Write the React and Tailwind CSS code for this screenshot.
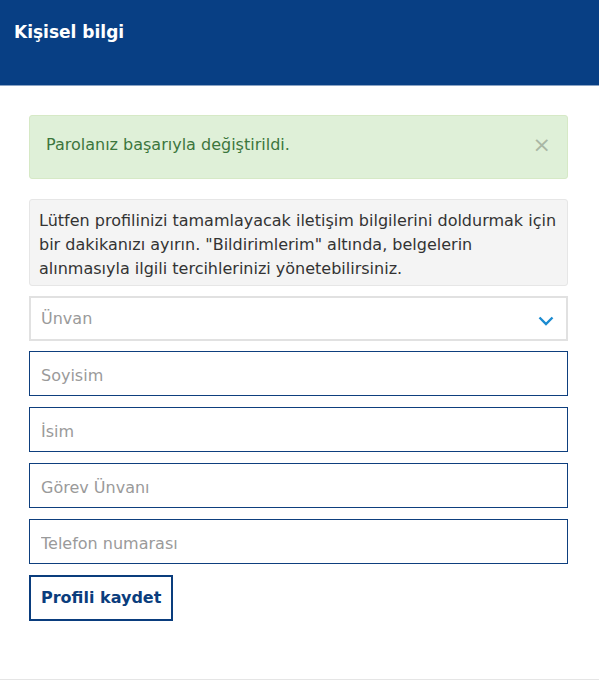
import React, { useState } from 'react';

const FIELDS = ['Soyisim', 'İsim', 'Görev Ünvanı', 'Telefon numarası'];

const App = () => {
  const [showAlert, setShowAlert] = useState(true);

  return (
    <div className="min-h-[681px] bg-white font-['DejaVu_Sans',Verdana,sans-serif] text-[#333]">
      <header className="h-[86px] bg-[#083f84] border-b border-[#8aa3c4] px-[14px] pt-[21px]">
        <h1 className="text-[17px] font-bold text-white leading-[22px]">Kişisel bilgi</h1>
      </header>

      <main className="pl-[29px] pr-[31px] pt-[29px] pb-[58px] border-b border-[#e5e5e5]">
        {showAlert && (
          <div className="h-[64px] mb-[20px] flex items-center justify-between rounded-[3px] bg-[#dff0d8] border border-[#d6e9c6] pl-[16px] pr-[16px] pb-[5px]">
            <span className="text-[16px] text-[#3c763d]">Parolanız başarıyla değiştirildi.</span>
            <button
              type="button"
              className="text-[#a9b6a4] text-[22px] leading-none"
              onClick={() => setShowAlert(false)}
            >
              ×
            </button>
          </div>
        )}

        <div className="mb-[10px] rounded-[3px] bg-[#f4f4f4] border border-[#e6e6e6] px-[9px] pt-[9px] pb-[4px] text-[16px] leading-[24px] text-[#333]">
          Lütfen profilinizi tamamlayacak iletişim bilgilerini doldurmak için bir dakikanızı ayırın. "Bildirimlerim" altında, belgelerin alınmasıyla ilgili tercihlerinizi yönetebilirsiniz.
        </div>

        <div className="h-[45px] mb-[10px] flex items-center justify-between border-2 border-[#e1e1e1] pl-[10px] pr-[12px] pt-[1px]">
          <span className="text-[16px] text-[#9a9a9a]">Ünvan</span>
          <svg width="16" height="10" viewBox="0 0 16 10" fill="none" className="mt-[3px]">
            <path d="M1.5 1.5 L8 8 L14.5 1.5" stroke="#1b8bd0" strokeWidth="2.4" />
          </svg>
        </div>

        {FIELDS.map(label => (
          <input
            key={label}
            type="text"
            placeholder={label}
            className="block w-full h-[45px] mb-[11px] border border-[#0e3f7e] px-[11px] pt-[3px] text-[16px] text-[#333] placeholder:text-[#9a9a9a] outline-none"
          />
        ))}

        <button
          type="button"
          className="h-[46px] px-[10px] border-2 border-[#0a3d7d] text-[16px] font-bold text-[#0a3d7d]"
        >
          Profili kaydet
        </button>
      </main>
    </div>
  );
};

export default App;
